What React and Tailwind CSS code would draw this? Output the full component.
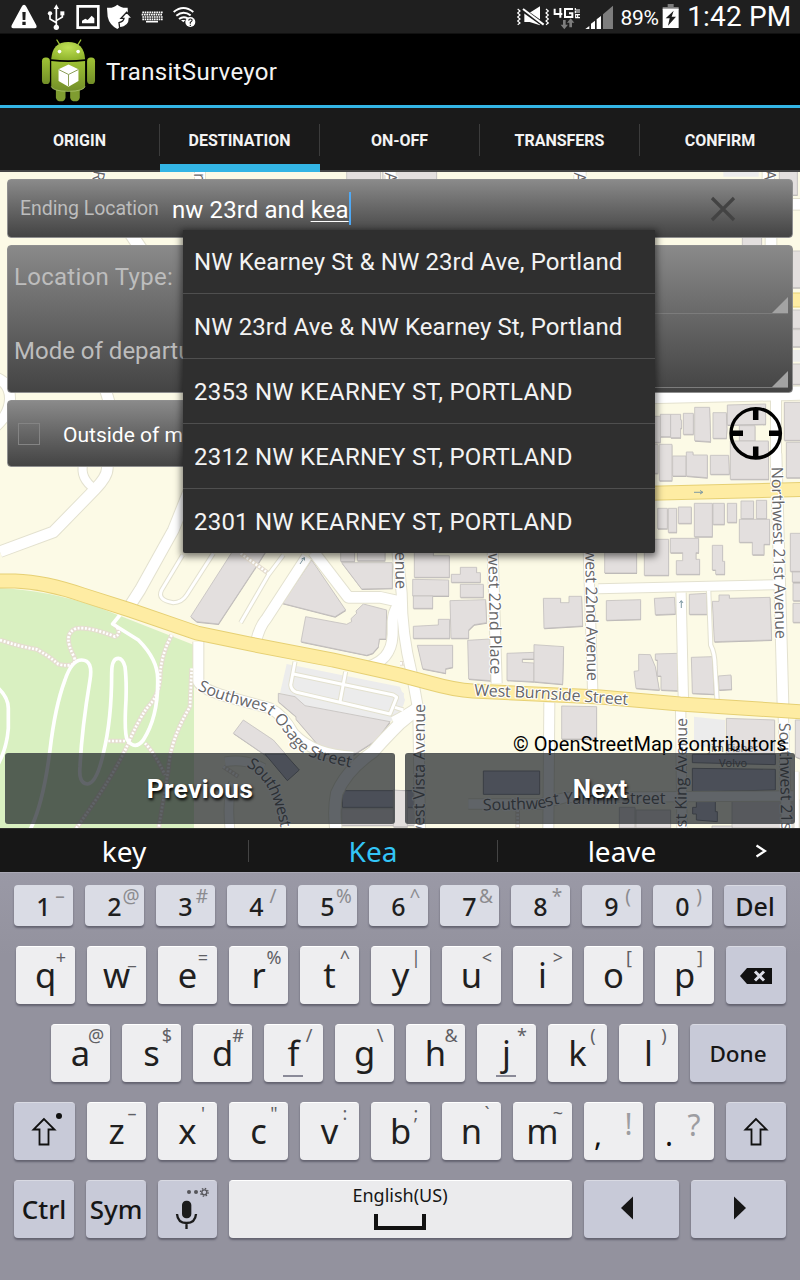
import React from "react";

const sheets = [
  {
    t: "translate(0 460) scale(0.33333)",
    buildings: [
      "700,270 800,270 775,310 655,492 590,485 572,470",
      "935,300 1037,450 1005,470 847,430",
      "1022,270 1064,270 1064,304 1022,304",
      "1072,270 1155,270 1155,302 1072,302",
      "1025,308 1177,308 1177,385 1085,387",
      "917,470 1040,493 1055,485 1053,476 1070,460 1068,453 1090,432 1160,450 1158,537 1138,537 1135,560 1118,580 1100,586 903,545",
      "835,700 885,710 915,737 1170,785 1130,840 1060,885 960,862 888,778 888,770 835,725",
      "730,780 820,840 855,880 810,895 700,820",
      "1025,1046 1260,1046 1260,1096 1025,1096",
    ],
    dark: ["855,882 898,930 862,962 795,882", "1027,992 1260,992 1260,1042 1027,1042"],
    lots: ["860,612 1200,680 1215,720 1200,765 1170,785 915,737 885,710 840,700"],
    roads: [
      ["M0 275L160 216L285 88Q322 50 322 25V-20", 32],
      ["M285 88Q238 55 250 10L290 -20", 24],
      ["M580 60L520 210L420 390L388 440", 32],
      ["M548 285L485 390Q470 420 520 428Q545 428 560 405L640 280", 9],
      ["M850 285L805 345L722 488", 9],
      ["M920 290L800 475Q778 500 768 545", 30],
      ["M940 275L1045 412L1140 412L1200 425", 32],
      ["M1215 420Q1175 440 1178 500Q1180 550 1165 575Q1150 605 1100 622", 30],
      ["M595 545V665Q605 690 700 715L810 745Q850 765 880 820Q940 885 1060 890", 30],
      ["M885 605L872 675Q874 692 890 697L1170 762L1190 712L1180 705L880 642", 9],
      ["M1037 635L1020 725M1185 742L1210 750", 9],
      ["M1255 745L1200 790Q1150 840 1120 875Q1040 930 1010 1000Q1000 1050 1008 1110", 34],
      ["M675 905Q740 895 790 925M690 1110Q680 1010 700 970", 26],
    ],
    paths: [
      "M0 540Q60 560 110 568Q150 590 175 613Q235 625 222 590Q185 520 230 505Q270 500 345 530Q370 520 340 490",
      "M515 525Q480 590 480 660Q475 710 440 745Q410 790 385 850Q340 950 225 1110",
      "M575 625L570 740Q510 840 505 930L475 1110",
      "M325 843H375M435 850Q465 880 495 945",
      "M722 280L805 340M670 920L715 950",
    ],
    trails: [
      "M360 465L338 492L415 540Q475 600 473 660Q475 770 430 840Q405 872 382 840Q372 820 378 720Q380 660 375 620Q368 595 355 595Q335 595 335 640Q335 780 310 880Q290 970 262 972Q235 970 240 920Q245 810 270 660Q280 600 245 600Q215 600 195 660Q165 740 150 870Q130 1030 90 1110",
      "M-10 680Q25 710 25 745V805Q20 870 -10 920",
    ],
  },
  {
    t: "translate(400 460) scale(0.33333)",
    lots: ["882,770 975,780 975,860 882,860", "-20,680 12,700 10,735 -20,745"],
    buildings: [
      "43,270 100,270 100,287 148,287 148,352 43,352",
      "38,358 146,360 146,408 38,408",
      "40,408 98,408 98,445 40,445",
      "154,343 181,343 181,322 230,322 230,338 241,338 241,367 154,367",
      "181,373 250,373 250,412 181,412",
      "150,422 257,419 260,488 222,494 206,510 206,535 153,535",
      "40,499 115,495 115,478 149,478 149,535 40,535",
      "52,556 158,556 158,622 137,626 137,640 68,626",
      "203,541 270,537 272,662 206,657",
      "321,580 402,577 402,597 367,597 367,607 402,609 402,665 321,661",
      "402,554 491,560 488,673 402,665",
      "430,415 482,415 482,428 507,428 507,409 545,409 548,498 432,505",
      "614,278 710,278 710,339 614,339",
      "733,238 806,238 806,346 733,346",
      "619,422 722,419 722,478 619,481",
      "763,415 824,412 826,462 766,464",
      "868,403 920,400 922,463 868,463",
      "937,424 957,424 957,405 988,405 988,415 1110,412 1115,540 943,545",
      "811,235 896,235 896,278 888,278 888,298 899,298 899,343 829,343 829,302 848,302 848,278 811,278",
      "937,256 968,256 968,304 974,304 974,343 947,343 947,330 937,330",
      "773,145 802,145 802,206 773,206",
      "805,145 830,145 830,217 805,217",
      "835,141 874,141 874,190 835,190",
      "883,130 937,130 937,230 883,230",
      "939,130 973,130 973,193 939,193",
      "982,130 1010,130 1010,187 982,187",
      "1023,123 1061,123 1061,176 1023,176",
      "1069,121 1100,121 1100,176 1069,176",
      "1018,178 1109,178 1109,253 1092,253 1092,284 1057,284 1057,247 1018,247",
      "1171,220 1210,220 1210,334 1171,334",
      "1177,336 1210,336 1210,366 1177,366",
      "1179,370 1210,370 1210,422 1179,422",
      "1179,430 1210,430 1210,487 1179,487",
      "702,634 716,632 716,583 751,584 766,620 778,690 708,685",
      "766,582 832,580 834,692 783,690 783,648 772,648 772,600 766,600",
      "874,592 937,590 943,703 877,700",
      "955,648 993,645 995,688 957,690",
      "485,738 590,740 590,837 485,837",
      "979,775 1124,780 1124,880 979,880",
      "1186,780 1210,780 1210,900 1186,890",
      "-20,990 22,993 22,1100 -20,1100",
      "658,1042 705,1042 705,1104 658,1104",
      "708,1050 812,1050 812,1104 708,1104",
      "996,1020 1200,1020 1200,1104 996,1104",
      "936,1098 996,1098 996,1110 936,1110",
    ],
    dark: [
      "250,933 419,933 419,1003 250,1003",
      "877,883 1126,883 1126,914 877,908",
      "877,925 1126,928 1126,990 877,996",
      "889,1022 946,1022 946,1055 952,1055 952,1085 889,1080 889,1062 878,1062 878,1042 889,1042",
    ],
    roads: [
      ["M-10 250L5 400Q5 520 35 640L55 750L60 1110", 30],
      ["M-20 785Q20 765 48 745", 30],
      ["M278 270L290 670", 30],
      ["M565 270L578 690", 28],
      ["M595 386L1125 374", 27],
      ["M843 398L850 712", 28],
      ["M926 392L932 555Q945 580 945 620L951 718", 10],
      ["M1128 -20L1140 400L1149 735", 32],
      ["M448 728L445 1110", 30],
      ["M842 750L846 1110", 28],
      ["M1150 770L1160 1110", 28],
      ["M205 1032L420 1032L500 1012L1180 1008", 28],
      ["M1190 935V1110", 12],
    ],
    paths: ["M353 1050V1105", "M0 610H12"],
    trails: [],
  },
  {
    t: "translate(400 165) scale(0.33333)",
    lots: ["970,10 1076,10 1076,35 970,35", "1178,555 1210,555 1210,590 1178,590"],
    buildings: [
      "-52,10 -20,10 -20,60 -52,60",
      "-20,10 110,10 110,60 -20,60",
      "1138,10 1192,10 1192,90 1138,90",
      "1027,205 1085,205 1085,260 1027,260",
      "1170,258 1210,258 1210,368 1170,368",
      "1170,435 1210,435 1210,490 1170,490",
      "1170,494 1210,494 1210,545 1170,545",
      "1170,597 1210,597 1210,658 1170,658",
      "750,754 781,754 781,832 750,832",
      "781,748 812,748 812,815 781,815",
      "812,748 842,748 842,765 845,765 845,790 842,790 842,818 812,818",
      "850,745 880,745 880,808 850,808",
      "884,727 929,727 932,830 884,827",
      "939,743 979,743 981,792 979,820 939,820",
      "982,720 1097,717 1097,778 982,780",
      "1018,782 1065,782 1065,828 1018,828",
      "991,828 1105,828 1106,943 991,943",
      "1153,712 1210,712 1210,826 1153,826",
      "1159,832 1210,832 1210,938 1159,938",
      "778,838 816,838 816,947 778,947",
      "755,838 774,838 774,925 755,925",
      "818,873 858,873 858,933 818,933",
      "859,861 879,861 879,870 922,870 922,938 859,933",
      "931,871 986,871 988,928 931,928",
    ],
    roads: [
      ["M1113 190V250", 32],
      ["M1170 118H1210", 32],
      ["M745 695L1210 684", 40],
      ["M1128 690V950", 30],
      ["M540 0V60M1105 0V50", 34],
    ],
    paths: [],
    trails: [],
  },
  {
    t: "translate(0 165) scale(0.33333)",
    lots: [],
    buildings: ["1040,10 1142,10 1142,60 1040,60"],
    roads: [
      ["M385 195L425 255", 36],
      ["M-20 635Q30 650 30 700Q30 750 -20 790", 30],
      ["M315 670L330 720", 32],
      ["M600 0V50M1172 0V50", 30],
    ],
    paths: [],
    trails: [],
  },
];

const BURNSIDE =
  "M-5 581H15Q45 582 83 595L130 610L197 633L250 644L333 660L400 675L430 683Q455 690 473 691L600 697L680 704L805 712";

const labels = [
  ["n21", "M771.5 467L775.500 640", "Northwest 21st Avenue", "start", 172],
  ["p22", "M487 480L490.500 674.500", "Northwest 22nd Place", "end", 165],
  ["a22", "M584.500 480L587 681", "Northwest 22nd Avenue", "end", 174],
  ["a23", "M394.500 400L395.500 589", "Northwest 23rd Avenue", "end", 174],
  ["vis", "M424 900L425 704", "Southwest Vista Avenue", "end", 178],
  ["kin", "M686 900L687 718", "Southwest King Avenue", "end", 174],
  ["s21", "M779 723L783 900", "Southwest 21st Avenue", "start", 172],
  ["bur", "M474 695.500L540 698.500L629 705", "West Burnside Street", "start", 154],
  ["yam", "M483 810.500L535 809Q545 808 552 805Q558 803.500 565 803.500L668 803.500", "Southwest Yamhill Street", "start", 183],
  ["osa", "M197 690C222 702 245 706 263 711C277 717 286 738 299 750C312 760 330 763 354 768", "Southwest Osage Street", "start", 178],
  ["cou", "M246 766Q262 776 270 792Q276 806 279 820L284 845", "Southwest C", "start", 86],
];

function MapCanvas() {
  return (
    <svg viewBox="0 172 800 656" className="absolute inset-0 h-full w-full">
      <rect x="0" y="172" width="800" height="656" fill="#fcfae6" />
      <path d="M0 588Q45 590 95 606L194 645V828H0Z" fill="#d9f0c1" />
      {sheets.map((s, i) => (
        <g key={i} transform={s.t}>
          {s.lots.map((p, j) => <polygon key={j} points={p} fill="#ececec" />)}
          {s.buildings.map((p, j) => (
            <g key={j}>
              <polygon points={p} fill="#b9b5b4" transform="translate(1 3)" />
              <polygon points={p} fill="#e3dfde" stroke="#c4c0bf" strokeWidth="2.500" />
            </g>
          ))}
          {(s.dark || []).map((p, j) => <polygon key={j} points={p} fill="#c0c2d0" stroke="#8d8c94" strokeWidth="3" />)}
        </g>
      ))}
      {sheets.map((s, i) => (
        <g key={i} transform={s.t} fill="none" strokeLinejoin="round">
          {s.paths.map((d, j) => <path key={j} d={d} stroke="#e5ddd0" strokeWidth="14" />)}
          {s.roads.map(([d, w], j) => <path key={j} d={d} stroke="#e3e1cf" strokeWidth={w + 6} />)}
        </g>
      ))}
      {sheets.map((s, i) => (
        <g key={i} transform={s.t} fill="none" stroke="#fff" strokeLinejoin="round">
          {s.paths.map((d, j) => <path key={j} d={d} strokeWidth="8" strokeDasharray="6 5" />)}
          {s.trails.map((d, j) => <path key={j} d={d} strokeWidth="11" />)}
          {s.roads.map(([d, w], j) => <path key={j} d={d} strokeWidth={w} />)}
        </g>
      ))}
      <g fill="none">
        <path d={BURNSIDE} stroke="#e6d074" strokeWidth="15" />
        <path d={BURNSIDE} stroke="#feeca3" strokeWidth="13" />
        <path d="M640 493.500L805 489.500" stroke="#e6d074" strokeWidth="15" />
        <path d="M640 493.500L805 489.500" stroke="#feeca3" strokeWidth="13" />
        <path d="M790 300H805" stroke="#e6d074" strokeWidth="15" />
        <path d="M790 300H805" stroke="#feeca3" strokeWidth="13" />
        <path d="M694 492.300H702M700 490.500L703 492.300L700 494M681.300 608V601M679.500 603L681.300 600.500L683 603M300 564L304 558M301.500 559L304.500 557.500V560.500" stroke="#7f9aa3" strokeWidth="1" />
      </g>
      <g fontFamily="'Open Sans', 'Noto Sans', sans-serif" fontSize="16" fontWeight="500" fill="#666668" stroke="#fff" strokeWidth="2.200" strokeLinejoin="round" paintOrder="stroke">
        {labels.map(([id, d, text, anchor, len]) => (
          <React.Fragment key={id}>
            <path id={id} d={d} fill="none" stroke="none" />
            <text textAnchor={anchor}>
              <textPath href={"#" + id} startOffset={anchor === "end" ? "100%" : "0%"} textLength={len}>{text}</textPath>
            </text>
          </React.Fragment>
        ))}
        <text transform="translate(574 172.500) rotate(90)">A</text>
        <text transform="translate(385 172.500) rotate(90)">A</text>
        <text transform="translate(764 170) rotate(90)">A</text>
        <text transform="translate(194 173) rotate(90)">r</text>
        <text transform="translate(94 170) rotate(100)">R</text>
      </g>
      <g fontFamily="'Open Sans', 'Noto Sans', sans-serif" fontSize="11" fill="#68686c" textAnchor="middle">
        <text x="733" y="752">Jim Fisher</text>
        <text x="733" y="767">Volvo</text>
      </g>
    </svg>
  );
}

function StatusLeft() {
  return (
    <svg viewBox="0 0 600 100" className="h-[33.33px] w-[200px]" fill="#fff">
      <path d="M72 14Q76 14 79 20L109 76Q112 85 104 85H40Q32 85 35 76L65 20Q68 14 72 14Z" />
      <path d="M67 36H77L76 60H68ZM67 65H77V75H67Z" fill="#1f1f1f" />
      <g stroke="#fff" strokeWidth="5" fill="none">
        <path d="M169 24V82M169 68L150 57V42M169 62L187 51V42" />
      </g>
      <path d="M169 13L177 27H161Z" />
      <circle cx="169" cy="82" r="8" />
      <circle cx="150" cy="40" r="6.500" />
      <path d="M181 34H193V46H181Z" />
      <path d="M229 15H299V87H229ZM237 23V79H291V23Z" fillRule="evenodd" />
      <path d="M246 70V62L256 56L263 60L275 47L283 55V70Z" />
      <path d="M321 23Q341 25 352 14Q364 25 383 23Q385 44 378 57Q371 74 352 87Q328 74 323 50Z" />
      <path d="M359 84Q389 80 388 55H397L380 37L363 55H372Q371 64 357 68Z" stroke="#1f1f1f" strokeWidth="4" />
      <path d="M427 37H488M425 44H486M427 51H488" stroke="#fff" strokeWidth="5" strokeDasharray="5 2" />
      <path d="M427 58H488" stroke="#fff" strokeWidth="5" strokeDasharray="5 2" />
      <path d="M438 65H474" stroke="#fff" strokeWidth="5" />
      <g fill="none" stroke="#fff" strokeWidth="6">
        <path d="M521 36Q550 12 580 36M529 47Q550 30 572 46M537 57Q550 47 563 55" />
      </g>
      <path d="M543 60H556L550 67Z" />
      <circle cx="571" cy="66" r="15" />
      <path d="M566 62Q567 57 571 57Q577 57 576 62Q575 65 571 67V71M571 74V78" stroke="#1f1f1f" strokeWidth="3.500" fill="none" />
    </svg>
  );
}

function StatusRight() {
  return (
    <div className="flex h-full items-center text-white">
      <svg viewBox="345 0 295 100" className="h-[33.33px] w-[98.33px]" fill="#fff">
        <path d="M350 27L357 33L350 39L357 45L350 51L357 57L350 63L357 69L350 74M435 27L442 33L435 39L442 45L435 51L442 57L435 63L442 69L435 74" fill="none" stroke="#fff" strokeWidth="3.500" />
        <path d="M370 38H386L417 19V76L386 66H370Z" />
        <path d="M366 30L428 74" stroke="#1f1f1f" strokeWidth="13" />
        <path d="M366 27L428 74" stroke="#fff" strokeWidth="6" />
        <path d="M461 26V42H484M478 24V53M516 27H492V51H514V40H504" stroke="#fff" strokeWidth="6" fill="none" />
        <path d="M523 24V30H537M523 36H537M523 33V40M537 44H524V53H537M530 44V52" stroke="#fff" strokeWidth="3.500" fill="none" />
        <path d="M486 60H494V74H501L490 88L479 74H486ZM505 82V68H498L509 55L520 68H513V82Z" fill="#7d7d7d" />
        <path d="M553 87L565 78V87ZM570 87V71L582 62V87ZM587 87V58L600 48V87Z" />
        <path d="M606 87V43L636 17V87Z" fill="#7d7d7d" />
      </svg>
      <span className="ml-[6.5px] w-[38.5px] whitespace-nowrap pt-[2px] text-[21px] leading-[24px] tracking-[-0.3px]">89%</span>
      <svg viewBox="787 0 52 100" className="ml-[3.5px] h-[33.33px] w-[17.33px]">
        <path d="M804 12H822V21H837V30H789V21H804Z" fill="#7d7d7d" />
        <path d="M789 26H837V84H789Z" fill="#fff" />
        <path d="M822 32L798 55H810L805 77L829 50H816Z" fill="#1f1f1f" />
      </svg>
      <span className="ml-[7.5px] w-[112.8px] whitespace-nowrap text-[28px] leading-[32px] tracking-[0.15px]">1:42 PM</span>
    </div>
  );
}

function Robot() {
  return (
    <svg viewBox="120 112 170 196" className="ml-[40px] mt-[1px] h-[65px] w-[57px]">
      <defs>
        <linearGradient id="skin" x1="0" y1="0" x2="0" y2="1">
          <stop offset="0" stopColor="#9fc235" />
          <stop offset="1" stopColor="#728e28" />
        </linearGradient>
        <radialGradient id="dome" cx="0.5" cy="0.300" r="0.700">
          <stop offset="0" stopColor="#bfe055" />
          <stop offset="1" stopColor="#8fb32c" />
        </radialGradient>
      </defs>
      <path d="M170 118L180 134M242 118L232 134" stroke="#9dbf38" strokeWidth="4" strokeLinecap="round" />
      <path d="M167 262H196V292Q194 303 182 303Q169 303 167 292ZM210 262H239V292Q237 303 225 303Q212 303 210 292Z" fill="#7f9c30" />
      <rect x="125" y="171" width="24" height="80" rx="11" fill="url(#skin)" />
      <rect x="261" y="171" width="24" height="80" rx="11" fill="url(#skin)" />
      <path d="M153 176Q156 124 204 124Q252 124 255 176Q204 182 153 176Z" fill="url(#dome)" />
      <path d="M153 181Q204 188 255 181V258Q252 272 204 273Q156 272 153 258Z" fill="url(#skin)" />
      <path d="M153 258Q156 272 204 273Q252 272 255 258" fill="none" stroke="#b9d07e" strokeWidth="2" />
      <circle cx="178" cy="153" r="5.500" fill="#fff" />
      <circle cx="234" cy="153" r="5.500" fill="#fff" />
      <path d="M205 192L235 206V242L205 259L175 242V206Z" fill="#fff" />
      <path d="M175 207L205 222L235 207M205 222V257" fill="none" stroke="#8a9e56" strokeWidth="3" />
    </svg>
  );
}

const suggestions = [
  ["NW Kearney St & NW 23rd Ave, Portland", "tracking-[0.1px] h-[64px]"],
  ["NW 23rd Ave & NW Kearney St, Portland", "tracking-[0.1px] h-[65px] pt-[2px]"],
  ["2353 NW KEARNEY ST, PORTLAND", "tracking-[0.21px] h-[65px] pt-[2px]"],
  ["2312 NW KEARNEY ST, PORTLAND", "tracking-[0.21px] h-[65px] pt-[2px]"],
  ["2301 NW KEARNEY ST, PORTLAND", "tracking-[0.21px] h-[64px] pt-[2px]"],
];

const PANEL = "rounded-[4px] border border-[#8f8f8f] bg-linear-to-b from-[#8a8a8a] to-[#444444]";

function Spinner({ className }) {
  return (
    <div className={"flex items-end justify-end border-b border-[#7c7c7c] " + className}>
      <svg viewBox="0 0 16 16" className="h-4 w-4"><path d="M0 16L16 0V16Z" fill="#a3a3a3" /></svg>
    </div>
  );
}

function Key({ main, alt, num, bump }) {
  return (
    <div
      className={
        "relative flex w-[59px] justify-center rounded-[4px] shadow-[0_2px_2px_rgba(60,60,75,0.55)] " +
        (num ? "h-[41px] bg-[#dadce5]" : "h-[58px] border-t border-white bg-[#eeeef0]")
      }
    >
      <span
        className={
          num
            ? "text-[25px] font-medium leading-[42px] text-[#1f1f1f]"
            : "text-[34.5px] leading-[56px] text-[#1f1f1f]"
        }
      >
        {main}
      </span>
      <span
        className={
          "absolute flex w-[24px] justify-center " +
          (num ? "left-[34px] top-[2px] text-[19px] leading-[18px] text-[#8b8b8f]" : "left-[33px] top-0 text-[18px] leading-[21px] text-[#606064]")
        }
      >
        {alt}
      </span>
      {bump && <span className="absolute bottom-[5px] left-[19px] h-[2px] w-[20px] bg-[#8a8a98]" />}
    </div>
  );
}

function FnKey({ className, children }) {
  return (
    <div className={"flex items-center justify-center rounded-[4px] border-t border-[#d9dae3] bg-[#c8cad8] font-medium text-[#161616] shadow-[0_2px_2px_rgba(60,60,75,0.55)] " + className}>
      {children}
    </div>
  );
}

function Shift({ dot }) {
  return (
    <svg viewBox="0 0 60 58" className="h-[58px] w-[60px]">
      <path d="M30 16L19.500 26.500H25.500V41.500H34.500V26.500H40.500Z" fill="none" stroke="#111" strokeWidth="1.800" />
      {dot && <circle cx="45" cy="13" r="3" fill="#111" />}
    </svg>
  );
}

function PunctKey({ main, alt, altClass }) {
  return (
    <div className="relative h-[58px] w-[59px] rounded-[4px] border-t border-white bg-[#eeeef0] shadow-[0_2px_2px_rgba(60,60,75,0.55)]">
      <span className="absolute left-[10px] top-[14px] text-[30px] leading-[36px] text-[#111]">{main}</span>
      <span className={"absolute w-[20px] text-center text-[30px] leading-[38px] text-[#9d9da1] " + altClass}>{alt}</span>
    </div>
  );
}

const pair = (mains, alts) => [...mains].map((m, i) => [m, alts[i]]);
const row1 = pair("1234567890", ["–", "@", "#", "/", "%", "^", "&", "*", "(", ")"]);
const row2 = pair("qwertyuiop", ["+", "_", "=", "%", "^", "|", "<", ">", "[", "]"]);
const row3 = pair("asdfghjkl", ["@", "$", "#", "/", "\\", "&", "*", "(", ")"]);
const row4 = pair("zxcvbnm", ["–", "'", "\"", ":", ";", "`", "~"]);

function Keyboard() {
  return (
    <div className="flex h-[408px] flex-col gap-5 border-t border-[#aaa9b5] bg-linear-to-b from-[#9a99a6] from-0% to-[#93929e] to-20% pl-[14px] pr-[14px] pt-[12px] font-['Noto_Sans',sans-serif]">
      <div className="flex gap-3">
        {row1.map(([m, a]) => <Key key={m} main={m} alt={a} num />)}
        <FnKey className="h-[41px] w-[62px] pt-[1px] text-[25px]">Del</FnKey>
      </div>
      <div className="flex gap-3 pl-[2px]">
        {row2.map(([m, a]) => <Key key={m} main={m} alt={a} />)}
        <FnKey className="h-[58px] w-[60px]">
          <svg viewBox="0 0 32 16" className="h-4 w-8">
            <path d="M0 8L7 0H32V16H7Z" fill="#111" />
            <path d="M15 3.500L24 12.500M24 3.500L15 12.500" stroke="#dcdde6" strokeWidth="3" />
          </svg>
        </FnKey>
      </div>
      <div className="flex gap-3 pl-[37px]">
        {row3.map(([m, a]) => <Key key={m} main={m} alt={a} bump={m === "f" || m === "j"} />)}
        <FnKey className="h-[58px] w-[96px] text-[22.5px]">Done</FnKey>
      </div>
      <div className="flex gap-3">
        <FnKey className="h-[58px] w-[61px] pr-[1px]"><Shift dot /></FnKey>
        {row4.map(([m, a]) => <Key key={m} main={m} alt={a} />)}
        <PunctKey main="," alt="!" altClass="left-[34.5px] top-[2px]" />
        <PunctKey main="." alt="?" altClass="left-[29px] top-[3px]" />
        <FnKey className="h-[58px] w-[60px]"><Shift /></FnKey>
      </div>
      <div className="flex gap-3">
        <FnKey className="h-[58px] w-[60px] text-[26px]">Ctrl</FnKey>
        <FnKey className="h-[58px] w-[60px] text-[26px]">Sym</FnKey>
        <FnKey className="h-[58px] w-[59px]">
          <svg viewBox="474 390 177 174" className="h-[58px] w-[59px]">
            <rect x="546" y="449" width="28" height="53" rx="13" fill="#1c1c1c" />
            <path d="M531 489Q533 516 559.500 516Q586 516 588 489M559.500 516V534" fill="none" stroke="#1c1c1c" strokeWidth="7" />
            <circle cx="567" cy="423" r="6" fill="#55555a" />
            <circle cx="588" cy="423" r="6" fill="#55555a" />
            <circle cx="613" cy="424" r="7.500" fill="none" stroke="#55555a" strokeWidth="4" />
            <circle cx="613" cy="424" r="11.500" fill="none" stroke="#55555a" strokeWidth="4" strokeDasharray="4.500 4.530" />
          </svg>
        </FnKey>
        <div className="flex h-[58px] w-[343px] flex-col items-center rounded-[4px] border-t border-white bg-[#ebebed] pr-[1px] shadow-[0_2px_2px_rgba(60,60,75,0.55)]">
          <span className="mt-[2px] text-[18px] leading-[25px] text-[#161616]">English(US)</span>
          <span className="mt-[6px] h-[16px] w-[52px] border-x-4 border-b-4 border-[#111]" />
        </div>
        <FnKey className="h-[58px] w-[95px]">
          <svg viewBox="0 0 12 24" className="mr-[9px] mt-[-3px] h-[24px] w-[12px]"><path d="M12 0.500V23.500L0 12Z" fill="#161616" /></svg>
        </FnKey>
        <FnKey className="h-[58px] w-[95px]">
          <svg viewBox="0 0 12 24" className="ml-[3px] mt-[-3px] h-[24px] w-[12px]"><path d="M0 0.500V23.500L12 12Z" fill="#161616" /></svg>
        </FnKey>
      </div>
    </div>
  );
}

export default function App() {
  return (
    <div className="flex h-[1280px] w-[800px] flex-col overflow-hidden bg-black font-['Roboto',sans-serif]">
      <header className="flex h-[34px] items-center justify-between border-b border-[#111] bg-[#1f1f1f]">
        <StatusLeft />
        <StatusRight />
      </header>

      <div className="flex h-[74px] items-center border-b-3 border-[#33b5e5] bg-black">
        <Robot />
        <h1 className="ml-[9px] pt-[4px] text-[24px] leading-[28px] tracking-[0.33px] text-[#f3f3f3]">TransitSurveyor</h1>
      </div>

      <nav className="flex h-[64px] bg-[#1a1a1a]">
        {["ORIGIN", "DESTINATION", "ON-OFF", "TRANSFERS", "CONFIRM"].map((t, i) => (
          <div
            key={t}
            className={
              "flex w-[160px] items-center border-b-2 " +
              (t === "DESTINATION" ? "border-[#33b5e5] shadow-[inset_0_-6px_0_#33b5e5]" : "border-[#454545]")
            }
          >
            <span className="flex-1 pt-[4px] text-center text-[16px] font-bold leading-[20px] text-[#f3f3f3]">{t}</span>
            {i < 4 && <span className="mt-[2px] h-[32px] w-px bg-[#3c3c3c]" />}
          </div>
        ))}
      </nav>

      <main className="relative h-[656px] overflow-hidden">
        <MapCanvas />
        <div className="relative flex h-full flex-col gap-[7px] pt-[7px]">
          <div className={"mx-[7px] flex h-[59px] items-center pl-[12px] " + PANEL}>
            <span className="w-[152px] whitespace-nowrap pt-[1px] text-[19.5px] leading-[24px] tracking-[-0.06px] text-[#bdbdbd]">Ending Location</span>
            <span className="flex h-[33px] items-center whitespace-nowrap border-r-2 border-[#4fa9f5] pt-[2px] text-[24px] leading-[28px] tracking-[0.1px] text-white">
              nw 23rd and&nbsp;<span className="underline decoration-1 underline-offset-[3px]">kea</span>
            </span>
            <svg viewBox="0 0 26 26" className="ml-auto mr-[56px] h-[26px] w-[26px]">
              <path d="M2 2L24 24M24 2L2 24" stroke="#434343" strokeWidth="3.200" />
            </svg>
          </div>

          <div className={"mx-[7px] flex h-[148px] justify-between pl-[6px] pr-[4px] text-[24px] leading-[28px] text-[#bdbdbd] " + PANEL}>
            <div className="flex flex-col gap-[46px] whitespace-nowrap pt-[17px]">
              <span className="tracking-[0.27px]">Location Type:</span>
              <span>Mode of departure:</span>
            </div>
            <div className="w-[500px]">
              <Spinner className="h-[68px]" />
              <Spinner className="h-[74px]" />
            </div>
          </div>

          <div className={"ml-[7px] flex h-[67px] w-[500px] items-center pl-[10px] " + PANEL}>
            <span className="h-[22px] w-[22px] border border-[#848484]" />
            <span className="ml-[23px] pt-[2px] text-[21px] leading-[26px] text-white">Outside of map area</span>
          </div>

          <p className="mr-[13.5px] mt-auto text-right text-[20px] leading-[24px] tracking-[0.02px] text-black">© OpenStreetMap contributors</p>
          <div className="-mt-[10px] mb-[4px] flex justify-between px-[5px]">
            {[["Previous", "tracking-[0.5px]"], ["Next", "tracking-normal"]].map(([t, tracking]) => (
              <button
                key={t}
                className={
                  "h-[71px] w-[390px] rounded-[3px] border border-[#55595c]/50 bg-[#0e141a]/66 text-[26px] font-bold leading-[30px] text-white [text-shadow:1px_2px_3px_#000] " +
                  tracking
                }
              >
                {t}
              </button>
            ))}
          </div>
        </div>

        <svg viewBox="0 0 54 54" className="absolute left-[729px] top-[234px] h-[54px] w-[54px]">
          <circle cx="26.700" cy="27.300" r="24.700" fill="none" stroke="#000" strokeWidth="3.400" />
          <path d="M26.700 2V14M26.700 40.500V52M2 27.300H14M40 27.300H52" stroke="#000" strokeWidth="5.500" />
        </svg>

        <ul className="absolute left-[183px] top-[58px] w-[472px] divide-y divide-[#4f4f4f] rounded-b-[2px] bg-[#2f2f2f] shadow-[0_2px_7px_2px_rgba(0,0,0,0.5)]">
          {suggestions.map(([t, size]) => (
            <li key={t} className={"flex items-center whitespace-nowrap pl-[11px] text-[24px] text-[#f3f3f3] " + size}>
              {t}
            </li>
          ))}
        </ul>
      </main>

      <div className="flex h-[44px] items-center border-t border-[#303030] bg-[#171717] text-[28px] leading-[40px] text-white font-['Noto_Sans',sans-serif]">
        <span className="w-[248px] text-center">key</span>
        <span className="h-[22px] w-px bg-[#444]" />
        <span className="w-[248px] text-center text-[#33c5f7]">Kea</span>
        <span className="h-[22px] w-px bg-[#444]" />
        <span className="w-[248px] text-center">leave</span>
        <svg viewBox="0 0 12 14" className="ml-[9px] h-[14px] w-[12px]"><path d="M1.500 1.500L10 7L1.500 12.500" fill="none" stroke="#fff" strokeWidth="2.200" /></svg>
      </div>

      <Keyboard />
    </div>
  );
}
